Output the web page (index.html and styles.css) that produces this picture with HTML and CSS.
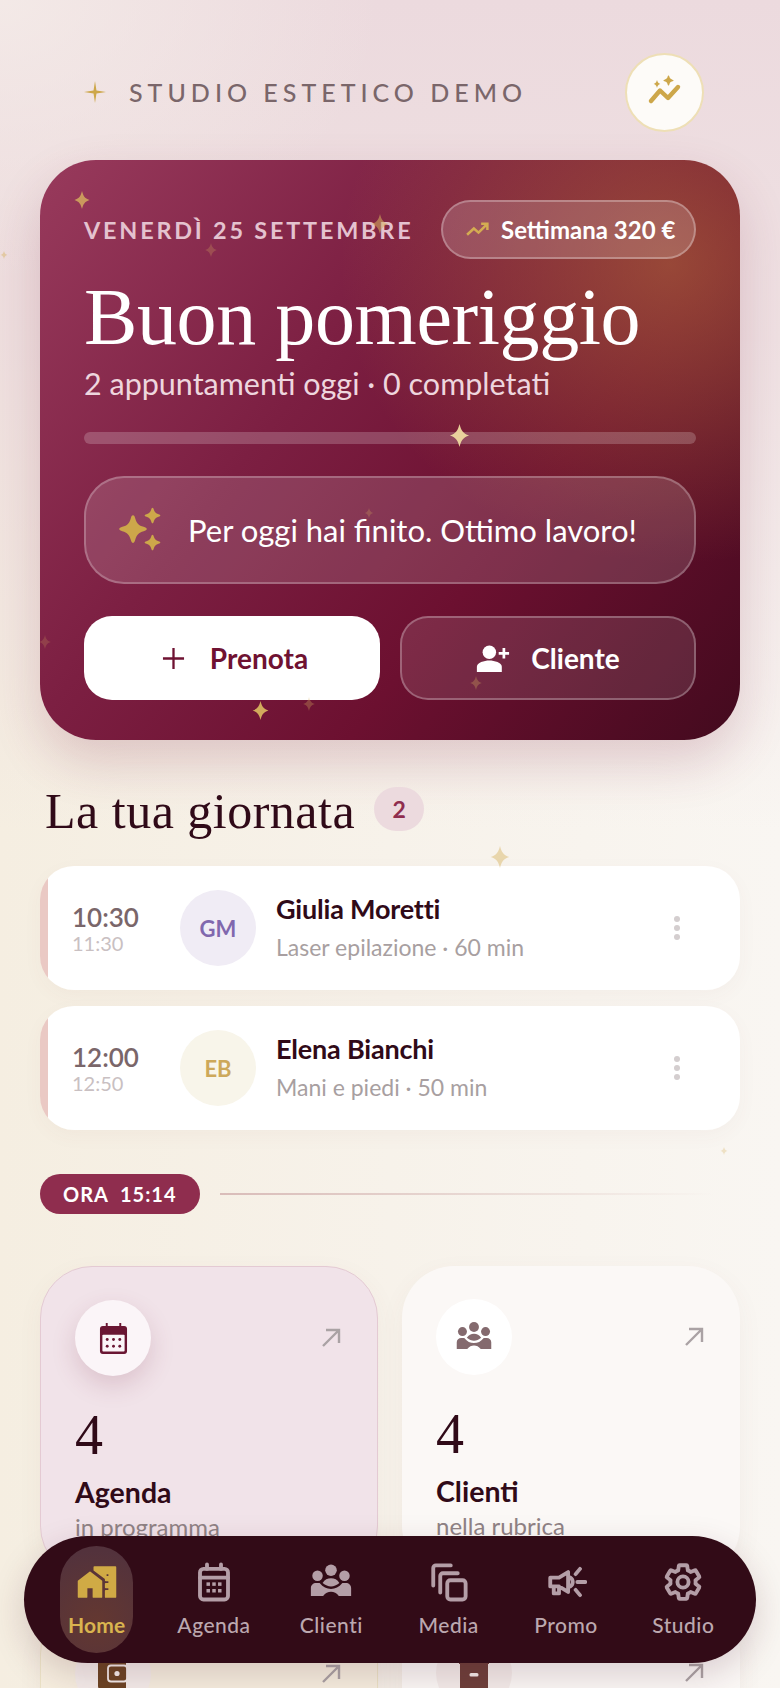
FILE: index.html
```html
<!DOCTYPE html>
<html lang="it">
<head>
<meta charset="UTF-8">
<meta name="viewport" content="width=device-width, initial-scale=1.0">
<title>Studio Estetico Demo</title>
<link rel="stylesheet" href="styles.css">
</head>
<body>
    <svg class="defs" width="0" height="0">
        <symbol id="star" viewBox="0 0 24 24">
            <path d="M12 0C13.5 6 15.5 10 22 12C15.5 14 13.5 18 12 24C10.5 18 8.5 14 2 12C8.5 10 10.5 6 12 0Z"/>
        </symbol>
        <symbol id="fat-star" viewBox="0 0 24 24">
            <path d="M12 1C13 1 13.3 2 13.8 3.5C15 7.5 16.5 9 20.5 10.2C22 10.7 23 11 23 12S22 13.3 20.5 13.8C16.5 15 15 16.5 13.8 20.5C13.3 22 13 23 12 23S10.7 22 10.2 20.5C9 16.5 7.5 15 3.5 13.8C2 13.3 1 13 1 12S2 10.7 3.5 10.2C7.5 9 9 7.5 10.2 3.5C10.7 2 11 1 12 1Z"/>
        </symbol>
        <symbol id="people" viewBox="0 0 24 24">
            <circle cx="12" cy="5.3" r="3.3"/><circle cx="4.3" cy="8.4" r="3"/><circle cx="19.7" cy="8.4" r="3"/>
            <path d="M7.2 12.5C8.4 10.6 10 9.8 12 9.8S15.6 10.6 16.8 12.5C15.2 13.8 13.6 14.5 12 14.5S8.8 13.8 7.2 12.5Z"/>
            <path d="M.5 20V15.5C.5 13.8 1.8 12.6 3.5 12.6H5.5C7.5 15 9.5 16 12 16S16.5 15 18.5 12.6H20.5C22.2 12.6 23.5 13.8 23.5 15.5V20H16.5C15.2 18.3 13.7 17.6 12 17.6S8.8 18.3 7.5 20Z"/>
        </symbol>
    </svg>

    <!-- Floating sparkles behind and over the content -->
    <svg class="spark spark-a"><use href="#star"/></svg>
    <svg class="spark spark-b"><use href="#star"/></svg>
    <svg class="spark spark-c"><use href="#star"/></svg>
    <svg class="spark spark-d"><use href="#star"/></svg>
    <svg class="spark spark-e"><use href="#star"/></svg>
    <svg class="spark spark-f"><use href="#star"/></svg>
    <svg class="spark spark-g"><use href="#star"/></svg>
    <svg class="spark spark-h"><use href="#star"/></svg>
    <svg class="spark spark-i"><use href="#star"/></svg>
    <svg class="spark spark-j"><use href="#star"/></svg>
    <svg class="spark spark-k"><use href="#star"/></svg>
    <svg class="spark spark-l"><use href="#star"/></svg>

    <div class="topbar">
        <div class="brand">
            <svg class="brand-star" viewBox="0 0 24 24"><path d="M12 0L13.6 10.4L24 12L13.6 13.6L12 24L10.4 13.6L0 12L10.4 10.4Z"/></svg>
            <span>STUDIO ESTETICO DEMO</span>
        </div>
        <div class="top-btn">
            <svg viewBox="0 0 40 40">
                <path class="gold-line" d="M6 29L15 18.5L23 26L33 15"/>
                <use href="#fat-star" x="18" y="3" width="11" height="11" class="gold-fill"/>
                <use href="#star" x="8" y="8" width="8" height="8" class="gold-fill"/>
            </svg>
        </div>
    </div>

    <section class="hero">
        <div class="hero-top">
            <span class="hero-date">VENERDÌ 25 SETTEMBRE</span>
            <span class="week-pill">
                <svg viewBox="0 0 24 24"><path class="gold-thin" d="M2 17L8.5 11L13 15L21 7M15.5 6.5H21.5V12.5"/></svg>
                Settimana 320 €
            </span>
        </div>
        <h1>Buon pomeriggio</h1>
        <p class="hero-sub">2 appuntamenti oggi · 0 completati</p>
        <div class="progress"></div>
        <div class="tip">
            <svg viewBox="0 0 48 48">
                <use href="#fat-star" x="0" y="6" width="30" height="34" class="gold-fill"/>
                <use href="#fat-star" x="26" y="0" width="17" height="19" class="gold-fill"/>
                <use href="#fat-star" x="26" y="27" width="17" height="19" class="gold-fill"/>
            </svg>
            <span>Per oggi hai finito. Ottimo lavoro!</span>
        </div>
        <div class="hero-actions">
            <a class="btn btn-main">
                <svg viewBox="0 0 24 24"><path d="M12 1V23M1 12H23"/></svg>
                Prenota
            </a>
            <a class="btn btn-ghost">
                <svg viewBox="0 0 32 26"><circle cx="12" cy="7" r="6.5"/><path d="M0 26V21C0 17 7 15 12 15S24 17 24 21V26Z"/><path d="M26 3V13M21 8H31" class="plus"/></svg>
                Cliente
            </a>
        </div>
    </section>

    <div class="section-title">
        <h2>La tua giornata</h2>
        <span class="count">2</span>
    </div>

    <div class="appt">
        <div class="appt-time"><strong>10:30</strong><span>11:30</span></div>
        <div class="avatar avatar-violet">GM</div>
        <div class="appt-info">
            <strong>Giulia Moretti</strong>
            <span>Laser epilazione · 60 min</span>
        </div>
        <div class="dots"><i></i><i></i><i></i></div>
    </div>
    <div class="appt">
        <div class="appt-time"><strong>12:00</strong><span>12:50</span></div>
        <div class="avatar avatar-gold">EB</div>
        <div class="appt-info">
            <strong>Elena Bianchi</strong>
            <span>Mani e piedi · 50 min</span>
        </div>
        <div class="dots"><i></i><i></i><i></i></div>
    </div>

    <div class="now">
        <span class="now-pill">ORA&nbsp; 15:14</span>
        <div class="now-line"></div>
    </div>

    <div class="tiles">
        <div class="tile tile-rose">
            <div class="tile-top">
                <div class="tile-icon tile-icon-lift">
                    <svg class="ico-cal" viewBox="0 0 30 32">
                        <path d="M7 0H9V3H21V0H23V3H26A3 3 0 0 1 29 6V29A3 3 0 0 1 26 32H4A3 3 0 0 1 1 29V6A3 3 0 0 1 4 3H7Z"/>
                        <rect class="cal-win" x="3.5" y="12" width="23" height="17.5" rx="1"/>
                        <g><circle cx="8.5" cy="17" r="1.5"/><circle cx="15" cy="17" r="1.5"/><circle cx="21.5" cy="17" r="1.5"/><circle cx="8.5" cy="24" r="1.5"/><circle cx="15" cy="24" r="1.5"/><circle cx="21.5" cy="24" r="1.5"/></g>
                    </svg>
                </div>
                <svg class="arrow" viewBox="0 0 20 20"><path d="M2 18L18 2M5 2H18V15"/></svg>
            </div>
            <div class="tile-num">4</div>
            <div class="tile-label">Agenda</div>
            <div class="tile-sub">in programma</div>
        </div>
        <div class="tile tile-plain">
            <div class="tile-top">
                <div class="tile-icon">
                    <svg class="ico-people" viewBox="0 0 24 24"><use href="#people"/></svg>
                </div>
                <svg class="arrow" viewBox="0 0 20 20"><path d="M2 18L18 2M5 2H18V15"/></svg>
            </div>
            <div class="tile-num">4</div>
            <div class="tile-label">Clienti</div>
            <div class="tile-sub">nella rubrica</div>
        </div>
        <div class="tile tile-cream">
            <div class="tile-top">
                <div class="tile-icon tile-icon-soft">
                    <svg class="ico-wallet" viewBox="0 0 30 30">
                        <path d="M3 0H28V30H3A3 3 0 0 1 0 27V3A3 3 0 0 1 3 0Z"/>
                        <rect class="wallet-win" x="10" y="6.5" width="19" height="16" rx="3"/>
                        <circle class="wallet-dot" cx="19" cy="14.5" r="2.6"/>
                    </svg>
                </div>
                <svg class="arrow" viewBox="0 0 20 20"><path d="M2 18L18 2M5 2H18V15"/></svg>
            </div>
        </div>
        <div class="tile tile-plain">
            <div class="tile-top">
                <div class="tile-icon tile-icon-soft">
                    <svg class="ico-case" viewBox="0 0 30 30">
                        <path d="M0 0H30V6H29V30H1V6H0Z"/>
                        <rect class="case-dash" x="10.5" y="15" width="9" height="3.5" rx="1.5"/>
                    </svg>
                </div>
                <svg class="arrow" viewBox="0 0 20 20"><path d="M2 18L18 2M5 2H18V15"/></svg>
            </div>
        </div>
    </div>

    <!-- Bottom navigation floats over the tiles -->
    <nav class="navbar">
        <a class="nav-item active">
            <svg viewBox="0 0 24 24"><path class="round-fill" d="M1.5 11.5V20.5H6V15H10V20.5H14.5V11.5L8 6.5Z"/><path class="round-fill" d="M10.5 3.5V5.2L17 10V11H19V13H17V15H19V17H17V20.5H22.5V3.5ZM19 9H17V7H19Z"/></svg>
            <span>Home</span>
        </a>
        <a class="nav-item">
            <svg viewBox="0 0 24 24">
                <rect class="outline" x="4" y="4.5" width="16" height="17.5" rx="2"/>
                <path class="outline" d="M4 9.5H20M8 2V4.5M16 2V4.5"/>
                <g><rect x="7.7" y="12.2" width="2" height="2"/><rect x="11" y="12.2" width="2" height="2"/><rect x="14.3" y="12.2" width="2" height="2"/><rect x="7.7" y="16" width="2" height="2"/><rect x="11" y="16" width="2" height="2"/><rect x="14.3" y="16" width="2" height="2"/></g>
            </svg>
            <span>Agenda</span>
        </a>
        <a class="nav-item">
            <svg viewBox="0 0 24 24"><use href="#people"/></svg>
            <span>Clienti</span>
        </a>
        <a class="nav-item">
            <svg viewBox="0 0 24 24">
                <path class="outline" d="M3 14V4A1.5 1.5 0 0 1 4.5 2.5H13M7 18V8.5A1.5 1.5 0 0 1 8.5 7H17"/>
                <rect class="outline" x="11" y="11" width="10.5" height="11" rx="1.8"/>
            </svg>
            <span>Media</span>
        </a>
        <a class="nav-item">
            <svg viewBox="0 0 24 24">
                <path class="outline" d="M3 9.5H8L13.2 6.3V17.7L8 14.5H3ZM5 14.5V18.5H8V14.5"/>
                <path class="outline" d="M14.5 9.5A3 3 0 0 1 14.5 14.5M17.5 7.5L20 4.5M18.5 12H23M17.5 16.5L20 19.5"/>
            </svg>
            <span>Promo</span>
        </a>
        <a class="nav-item">
            <svg viewBox="0 0 24 24">
                <path class="outline" d="M19.14 12.94c.04-.3.06-.61.06-.94 0-.32-.02-.64-.07-.94l2.03-1.58c.18-.14.23-.41.12-.61l-1.92-3.32c-.12-.22-.37-.29-.59-.22l-2.39.96c-.5-.38-1.03-.7-1.62-.94L14.4 2.81c-.04-.24-.24-.41-.48-.41h-3.84c-.24 0-.43.17-.47.41L9.25 5.35C8.66 5.59 8.12 5.92 7.63 6.29L5.24 5.33c-.22-.08-.47 0-.59.22L2.74 8.87C2.62 9.08 2.66 9.34 2.86 9.48l2.03 1.58C4.84 11.36 4.8 11.69 4.8 12s.02.64.07.94l-2.03 1.58c-.18.14-.23.41-.12.61l1.92 3.32c.12.22.37.29.59.22l2.39-.96c.5.38 1.03.7 1.62.94l.36 2.54c.05.24.24.41.48.41h3.84c.24 0 .44-.17.47-.41l.36-2.54c.59-.24 1.13-.56 1.62-.94l2.39.96c.22.08.47 0 .59-.22l1.92-3.32c.12-.22.07-.47-.12-.61Z"/>
                <circle class="outline" cx="12" cy="12" r="3.2"/>
            </svg>
            <span>Studio</span>
        </a>
    </nav>
</body>
</html>
```

FILE: styles.css
```css
/* General formatting */
* {
    box-sizing: border-box;
}

body {
    position: relative;
    width: 780px;
    height: 1688px;
    margin: 0;
    overflow: hidden;
    font-family: Lato, "Open Sans", sans-serif;
    color: #300a18;
    background:
        radial-gradient(380px 280px at 0 0, rgba(245, 237, 233, 0.8), rgba(245, 237, 233, 0)),
        linear-gradient(180deg, #ecdade 0, rgba(236, 218, 222, 0.75) 340px, rgba(240, 224, 226, 0) 830px),
        linear-gradient(90deg, #f5eee1 0, #f7f2ea 50%, #f9f6f2 100%);
}

.defs {
    position: absolute;
}

/* Sparkles */
.spark {
    position: absolute;
    z-index: 3;
    fill: #d8b35f;
}

.spark-a { left: 73px; top: 191px; width: 18px; height: 18px; opacity: 0.8; }
.spark-b { left: 370px; top: 214px; width: 20px; height: 20px; opacity: 0.55; }
.spark-c { left: 204px; top: 243px; width: 14px; height: 14px; opacity: 0.25; }
.spark-d { left: 0; top: 251px; width: 8px; height: 8px; opacity: 0.45; }
.spark-e { left: 448px; top: 424px; width: 23px; height: 23px; opacity: 0.95; fill: #eed9a0; }
.spark-f { left: 364px; top: 508px; width: 10px; height: 10px; opacity: 0.25; }
.spark-g { left: 38px; top: 635px; width: 14px; height: 14px; opacity: 0.2; }
.spark-h { left: 469px; top: 676px; width: 14px; height: 14px; opacity: 0.3; }
.spark-i { left: 251px; top: 701px; width: 19px; height: 19px; opacity: 0.95; }
.spark-j { left: 302px; top: 697px; width: 14px; height: 14px; opacity: 0.3; }
.spark-k { left: 489px; top: 846px; width: 22px; height: 22px; opacity: 0.45; z-index: 0; }
.spark-l { left: 720px; top: 1147px; width: 8px; height: 8px; opacity: 0.3; z-index: 0; }

/* Shared icon paints */
.gold-fill {
    fill: #cda74a;
}

.gold-line {
    fill: none;
    stroke: #cda74a;
    stroke-width: 4.4;
    stroke-linecap: round;
    stroke-linejoin: round;
}

.gold-thin {
    fill: none;
    stroke: #d4ac52;
    stroke-width: 2.4;
}

/* Header */
.topbar {
    display: flex;
    justify-content: space-between;
    align-items: center;
    height: 78px;
    margin: 53px 76px 0 84px;
}

.brand {
    display: flex;
    align-items: center;
    gap: 23px;
    font-size: 25px;
    font-weight: 500;
    letter-spacing: 0.2em;
    color: #7a666a;
}

.brand-star {
    width: 22px;
    height: 22px;
    fill: #cda74a;
}

.top-btn {
    display: flex;
    justify-content: center;
    align-items: center;
    width: 79px;
    height: 79px;
    border-radius: 50%;
    background-color: #fdfbf8;
    border: 2px solid #eedfb6;
}

.top-btn svg {
    width: 40px;
    height: 40px;
}

/* Hero card */
.hero {
    margin: 29px 40px 0;
    height: 580px;
    padding: 40px 44px 0;
    border-radius: 56px;
    color: #fff;
    background:
        radial-gradient(330px 300px at 90% 18%, rgba(190, 120, 60, 0.52), rgba(190, 120, 60, 0)),
        linear-gradient(128deg, #983a5c 0, #7c1f42 38%, #6c1030 66%, #430a1e 100%);
    box-shadow: 0 22px 50px rgba(130, 40, 70, 0.2);
}

.hero-top {
    display: flex;
    justify-content: space-between;
    align-items: center;
    height: 59px;
}

.hero-date {
    font-size: 23.4px;
    font-weight: 700;
    letter-spacing: 0.12em;
    color: #e4c2cf;
}

.week-pill {
    display: flex;
    align-items: center;
    gap: 11px;
    width: 255px;
    height: 59px;
    padding-left: 22px;
    border-radius: 30px;
    font-size: 24px;
    font-weight: 700;
    background-color: rgba(255, 255, 255, 0.17);
    border: 2px solid rgba(255, 255, 255, 0.28);
}

.week-pill svg {
    width: 25px;
    height: 25px;
}

h1 {
    margin: 16px 0 0;
    font-family: "Liberation Serif", serif;
    font-size: 80px;
    font-weight: 400;
    line-height: 84px;
    letter-spacing: -0.4px;
}

.hero-sub {
    margin: 6px 0 0;
    font-size: 30.5px;
    line-height: 36px;
    color: #eed6de;
}

.progress {
    height: 12px;
    margin-top: 31px;
    border-radius: 6px;
    background-color: rgba(255, 255, 255, 0.2);
}

.tip {
    display: flex;
    align-items: center;
    gap: 22px;
    height: 108px;
    margin-top: 32px;
    padding-left: 32px;
    border-radius: 40px;
    font-size: 31px;
    background-color: rgba(255, 255, 255, 0.14);
    border: 2px solid rgba(255, 255, 255, 0.24);
}

.tip svg {
    width: 48px;
    height: 48px;
}

.hero-actions {
    display: grid;
    grid-template-columns: 1fr 1fr;
    gap: 20px;
    margin-top: 32px;
}

.btn {
    display: flex;
    justify-content: center;
    align-items: center;
    gap: 25px;
    height: 84px;
    border-radius: 28px;
    font-size: 28px;
    font-weight: 700;
}

.btn-main {
    padding-left: 6px;
    background-color: #fff;
    color: #6f1232;
}

.btn-main svg {
    width: 23px;
    height: 23px;
    fill: none;
    stroke: #6f1232;
    stroke-width: 2.4;
}

.btn-ghost {
    background-color: rgba(255, 255, 255, 0.11);
    border: 2px solid rgba(255, 255, 255, 0.27);
    gap: 20px;
}

.btn-ghost svg {
    width: 35px;
    height: 27px;
    fill: #fff;
}

.btn-ghost .plus {
    fill: none;
    stroke: #fff;
    stroke-width: 2.6;
}

/* Section title */
.section-title {
    display: flex;
    align-items: center;
    gap: 19px;
    height: 48px;
    margin: 47px 40px 0 45px;
}

h2 {
    margin: 0;
    font-family: "Liberation Serif", serif;
    font-size: 50px;
    font-weight: 400;
    letter-spacing: 0.01em;
    color: #300a18;
}

.count {
    display: flex;
    justify-content: center;
    align-items: center;
    width: 50px;
    height: 44px;
    margin-top: -4px;
    border-radius: 22px;
    font-size: 23px;
    font-weight: 700;
    color: #8f2d4e;
    background-color: #ecdade;
}

/* Appointment rows */
.appt {
    display: flex;
    align-items: center;
    height: 124px;
    margin: 0 40px 16px;
    padding-left: 32px;
    border-radius: 34px;
    background: linear-gradient(90deg, #eac9c4 8px, #fff 8px);
    box-shadow: 0 6px 20px rgba(120, 70, 70, 0.04);
}

.section-title + .appt {
    margin-top: 31px;
}

.appt-time {
    display: flex;
    flex-direction: column;
    width: 108px;
}

.appt-time strong {
    font-size: 26px;
    line-height: 30px;
    font-weight: 600;
    color: #7a666a;
}

.appt-time span {
    font-size: 20px;
    line-height: 22px;
    color: #c9c0c2;
}

.avatar {
    display: flex;
    justify-content: center;
    align-items: center;
    width: 76px;
    height: 76px;
    border-radius: 50%;
    font-size: 22px;
    font-weight: 700;
}

.avatar-violet {
    background-color: #f0ecf5;
    color: #8068ae;
}

.avatar-gold {
    background-color: #f8f5ea;
    color: #cda85a;
}

.appt-info {
    display: flex;
    flex-direction: column;
    gap: 8px;
    flex: 1;
    margin: -3px 0 0 20px;
}

.appt-info strong {
    font-size: 27px;
    line-height: 33px;
    font-weight: 700;
    letter-spacing: -0.2px;
    color: #300a18;
}

.appt-info span {
    font-size: 23px;
    line-height: 28px;
    color: #a89fa1;
}

.dots {
    display: flex;
    flex-direction: column;
    gap: 3px;
    margin-right: 60px;
}

.dots i {
    width: 6px;
    height: 6px;
    border-radius: 50%;
    background-color: #d4cecf;
}

/* Current time marker */
.now {
    display: flex;
    align-items: center;
    gap: 20px;
    margin: 44px 40px 0;
}

.now-pill {
    display: flex;
    align-items: center;
    height: 40px;
    padding: 0 23px;
    border-radius: 20px;
    font-size: 20px;
    font-weight: 700;
    letter-spacing: 0.05em;
    color: #fff;
    background-color: #8f2d4e;
}

.now-line {
    flex: 1;
    height: 2px;
    margin-right: 25px;
    background: linear-gradient(90deg, #d9bcb9, rgba(217, 188, 185, 0));
}

/* Shortcut tiles */
.tiles {
    display: grid;
    grid-template-columns: 1fr 1fr;
    gap: 24px;
    margin: 52px 40px 0;
}

.tile {
    height: 312px;
    padding: 33px 34px;
    border-radius: 52px;
    box-shadow: 0 8px 26px rgba(120, 70, 70, 0.05);
}

.tile-rose {
    background-color: #f1e3e9;
    border: 1.5px solid #e4cad3;
}

.tile-plain {
    background-color: #fbf8f6;
}

.tile-cream {
    background-color: #f6eedf;
    border: 1.5px solid #ebe2c6;
}

.tile-top {
    display: flex;
    justify-content: space-between;
    align-items: center;
}

.tile-icon {
    display: flex;
    justify-content: center;
    align-items: center;
    width: 76px;
    height: 76px;
    border-radius: 50%;
    background-color: #fff;
}

.tile-icon-lift {
    background-color: #fbf5f8;
    box-shadow: 0 10px 24px rgba(130, 50, 80, 0.18);
}

.tile-icon-soft {
    background-color: #f4ecea;
}

.ico-cal {
    width: 29px;
    height: 31px;
    fill: #6a1633;
}

.cal-win {
    fill: #fbf5f8;
}

.ico-people {
    width: 36px;
    height: 36px;
    fill: #846a6e;
}

.ico-wallet {
    width: 30px;
    height: 30px;
    fill: #6c4424;
}

.wallet-win {
    fill: #6c4424;
    stroke: #f4ecea;
    stroke-width: 1.8;
}

.wallet-dot {
    fill: #f4ecea;
}

.ico-case {
    width: 30px;
    height: 30px;
    fill: #6e3f3a;
}

.case-dash {
    fill: #f4ecea;
}

.arrow {
    width: 20px;
    height: 20px;
    margin-right: 2px;
    fill: none;
    stroke: #aaa2a4;
    stroke-width: 2.4;
}

.tile-num {
    margin-top: 27px;
    font-family: "Liberation Serif", serif;
    font-size: 56px;
    line-height: 64px;
}

.tile-label {
    margin-top: 8px;
    font-size: 28.5px;
    line-height: 34px;
    font-weight: 700;
}

.tile-sub {
    margin-top: 3px;
    font-size: 24px;
    line-height: 30px;
    color: #8f8285;
}

/* Bottom navigation */
.navbar {
    position: absolute;
    left: 24px;
    top: 1536px;
    z-index: 5;
    display: grid;
    grid-template-columns: repeat(6, 1fr);
    width: 732px;
    height: 127px;
    padding: 10px 14px;
    border-radius: 64px;
    background-color: #320b17;
    box-shadow: 0 12px 34px rgba(70, 20, 40, 0.18);
}

.nav-item {
    display: flex;
    flex-direction: column;
    align-items: center;
    justify-self: center;
    width: 73px;
    padding-top: 15px;
    border-radius: 37px;
    font-size: 21px;
    font-weight: 500;
    letter-spacing: 0.5px;
    color: #bca8af;
}

.nav-item svg {
    width: 42px;
    height: 42px;
    fill: #b49ea7;
}

.nav-item span {
    margin-top: 10px;
    line-height: 24px;
}

.nav-item.active {
    font-weight: 700;
    letter-spacing: 0.2px;
    color: #d9b44f;
    background: radial-gradient(70px 70px at 50% 70%, rgba(160, 110, 80, 0.45), rgba(255, 255, 255, 0.16));
}

.nav-item.active svg {
    width: 52px;
    fill: #d0aa45;
}

.round-fill {
    stroke: #d0aa45;
    stroke-width: 1;
    stroke-linejoin: round;
}

.outline {
    fill: none;
    stroke: #b49ea7;
    stroke-width: 2.2;
    stroke-linejoin: round;
    stroke-linecap: round;
}
```
